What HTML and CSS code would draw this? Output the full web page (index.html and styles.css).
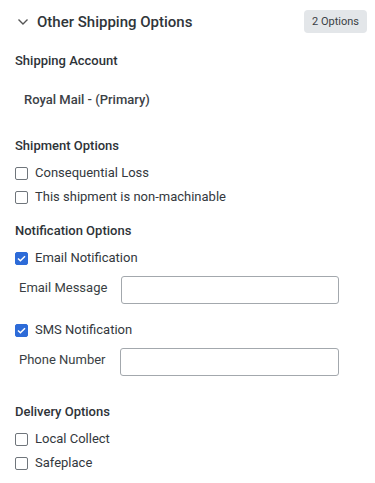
FILE: index.html
```html
<!DOCTYPE html>
<html lang="en">
<head>
  <meta charset="UTF-8">
  <meta name="viewport" content="width=device-width, initial-scale=1.0">
  <title>Other Shipping Options</title>
  <link rel="stylesheet" href="styles.css">
</head>
<body>

<div class="panel">
  <!-- Header -->
  <div class="panel-header">
    <div class="panel-title">
      <svg class="chevron" width="12" height="8" viewBox="0 0 12 8"><path d="M1.5 1.5 L6 6 L10.5 1.5" fill="none" stroke="#555" stroke-width="1.4"/></svg>
      <span>Other Shipping Options</span>
    </div>
    <span class="badge">2 Options</span>
  </div>

  <!-- Shipping Account -->
  <section class="group account-group">
    <h3>Shipping Account</h3>
    <p class="account">Royal Mail - (Primary)</p>
  </section>

  <!-- Shipment Options -->
  <section class="group">
    <h3>Shipment Options</h3>
    <label class="check"><span class="box"></span>Consequential Loss</label>
    <label class="check"><span class="box"></span>This shipment is non-machinable</label>
  </section>

  <!-- Notification Options -->
  <section class="group">
    <h3>Notification Options</h3>
    <label class="check"><span class="box checked"><svg width="9" height="7" viewBox="0 0 9 7"><path d="M1 3.5 L3.4 5.8 L8 1.2" fill="none" stroke="#fff" stroke-width="1.5"/></svg></span>Email Notification</label>
    <div class="field">
      <span class="field-label">Email Message</span>
      <input type="text">
    </div>
    <label class="check"><span class="box checked"><svg width="9" height="7" viewBox="0 0 9 7"><path d="M1 3.5 L3.4 5.8 L8 1.2" fill="none" stroke="#fff" stroke-width="1.5"/></svg></span>SMS Notification</label>
    <div class="field">
      <span class="field-label">Phone Number</span>
      <input type="text">
    </div>
  </section>

  <!-- Delivery Options -->
  <section class="group">
    <h3>Delivery Options</h3>
    <label class="check"><span class="box"></span>Local Collect</label>
    <label class="check"><span class="box"></span>Safeplace</label>
  </section>
</div>

</body>
</html>
```

FILE: styles.css
```css
body {
  font-family: Roboto, "Liberation Sans", sans-serif;
  background-color: #fff;
  color: #2e3338;
  margin: 0;
  padding: 0;
}

.panel {
  padding: 10px 8px 0 15px;
}

.panel-header {
  display: flex;
  justify-content: space-between;
  align-items: center;
  height: 23px;
}

.panel-title {
  display: flex;
  align-items: center;
  font-size: 15px;
  font-weight: 500;
  color: #30353a;
}

.chevron {
  margin: 0 8px 0 2px;
}

.badge {
  background-color: #e3e6e9;
  border-radius: 4px;
  font-size: 11px;
  color: #3a3f44;
  padding: 0 8px;
  height: 23px;
  line-height: 23px;
}

.group {
  display: flex;
  flex-direction: column;
  margin-top: 12px;
}

.account-group {
  margin-top: 18px;
}

h3 {
  font-size: 13px;
  font-weight: 500;
  margin: 0 0 5px;
  line-height: 20px;
}

.account {
  font-size: 13px;
  font-weight: 500;
  color: #3c4146;
  margin: 14px 0 14px 9px;
  line-height: 20px;
}

.check {
  display: flex;
  align-items: center;
  font-size: 13px;
  color: #33383d;
  line-height: 20px;
  height: 24px;
}

.box {
  width: 11px;
  height: 11px;
  border: 1px solid #6f757b;
  border-radius: 2px;
  margin-right: 7px;
  display: flex;
  align-items: center;
  justify-content: center;
}

.box.checked {
  background-color: #2d6bd8;
  border-color: #2d6bd8;
}

.field {
  display: flex;
  align-items: center;
  padding-left: 4px;
  margin: 6px 28px 14px 0;
}

.field-label {
  font-size: 13px;
  color: #3a3f44;
  margin: 0 14px 5px 0;
}

input[type="text"] {
  flex: 1;
  height: 28px;
  box-sizing: border-box;
  border: 1px solid #a3a8ad;
  border-radius: 3px;
  margin: 0;
}
```
